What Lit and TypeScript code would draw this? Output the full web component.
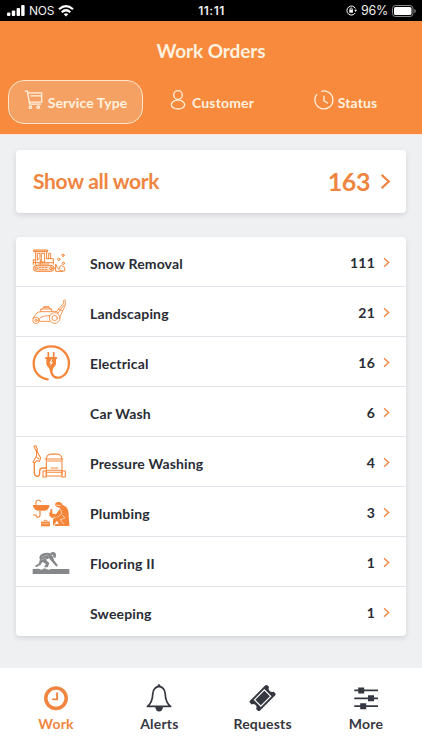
import { LitElement, html, css, svg } from "lit";
import { customElement } from "lit/decorators.js";
import { classMap } from "lit/directives/class-map.js";

const plow = html`<svg class="pic" viewBox="48 21 132 120">
  <g fill="none" stroke="currentColor" stroke-width="3" stroke-linejoin="round" stroke-linecap="round">
    <path d="M60 42H101V47H60Z" fill="#fbc7a2" />
    <path d="M65 47V85M98 47V68M71 52H78V64L71 72ZM83 52H92V78H83Z" />
    <path d="M79 70V85M98 68H118V85M104 68V52H110V68M58 72H65M58 72V85M58 80H118" />
    <path d="M74 84H104" />
    <rect x="58" y="88" width="62" height="18" rx="9" fill="#fde0cb" />
    <circle cx="67" cy="97" r="4" /><circle cx="111" cy="97" r="4" />
    <path d="M76 94H102M76 101H102" stroke-dasharray="5 4" />
    <path d="M120 97H125V84L130 95C133 100 138 103 145 106H125V97M137 98C135 90 141 86 145 90C152 90 153 99 152 105H145" />
    <circle cx="147" cy="58" r="3.5" /><circle cx="134" cy="70" r="3.5" /><circle cx="148" cy="82" r="3.5" />
  </g>
</svg>`;

const mower = html`<svg class="pic" viewBox="48 171 132 120">
  <g fill="none" stroke="currentColor" stroke-width="2.6" stroke-linejoin="round" stroke-linecap="round">
    <circle cx="66" cy="253" r="9.5" /><circle cx="66" cy="253" r="3.5" />
    <circle cx="122" cy="246" r="16" /><circle cx="122" cy="246" r="8" />
    <path d="M77 256H107M57 246L66 234C69 229 76 227 84 227H112C118 224 127 226 133 230M76 250C77 243 86 240 106 239" />
    <path d="M80 227V219H86L89 212H105L108 219H113V227M84 219H110M90 215H104" />
    <path d="M128 226L149 201V193Q151 189 154 193V207L139 240M133 230L150 207M133 219L145 224" />
  </g>
</svg>`;

const plug = html`<svg class="pic" viewBox="48 21 132 120">
  <path d="M101 130C75 127 59 107 59 82A53 51 0 0 1 165 82C165 103 154 119 139 124C125 128 114 122 111 104" fill="none" stroke="currentColor" stroke-width="6.8" stroke-linecap="round" />
  <path d="M103 63V48M119 63V48" stroke="currentColor" stroke-width="5" />
  <path d="M94 63H129V69H126V83Q124 92 118 96L115 106H108L105 96Q98 92 97 83V69H94Z" fill="currentColor" />
  <path d="M113 69L106 82H111L108 91L117 79H112L115 69Z" fill="#fff" />
</svg>`;

const washer = html`<svg class="pic" viewBox="48 21 132 120">
  <g fill="none" stroke="currentColor" stroke-width="3.2" stroke-linejoin="round" stroke-linecap="round">
    <path d="M60 31L66 29L70 40L65 43ZM67 42L68 59L62 70L57 78L62 81L68 74L76 76L80 66L73 53L68 42M69 65L74 68" />
    <path d="M61 81V109Q61 121 70 121Q77 121 77 112V104Q77 98 85 96H97" stroke-width="4" />
    <path d="M97 116V69Q99 55 110 55H132Q142 56 144 69V116M109 54H132M94 69H147M99 103H141M99 109H141" />
    <path d="M101 75H140M112 96H131" stroke-dasharray="8 3" />
    <path d="M87 105H97V123H87ZM144 105H154V123H144ZM97 120H144" />
  </g>
</svg>`;

const plumber = html`<svg class="pic" viewBox="48 171 132 120">
  <path d="M57 207H106V211Q104 223 93 224H71Q60 222 57 211Z" fill="currentColor" />
  <g fill="none" stroke="currentColor" stroke-width="3.6">
    <path d="M66 206V198Q67 192 73 192Q79 192 80 198M78 225V239Q77 244 71 244Q66 243 66 237H57" />
    <path d="M90 257V253H99V257" stroke-width="2.5" />
  </g>
  <path d="M81 257H108V271H81Z" fill="currentColor" />
  <path d="M82 263H107" stroke="#fff" stroke-width="1.3" />
  <path d="M123 207Q123 199 132 198Q143 197 145 206L156 212Q165 220 164 241L166 263V270H122V265L135 263L129 254L121 265L117 270V249L132 239L119 245Q107 247 109 240H106V231L109 227V220H115V233L126 235L139 216L129 213L124 209Z" fill="currentColor" />
  <path d="M139 219L144 232L131 244M145 237L153 246L139 251L149 265M124 207L140 209" fill="none" stroke="#fff" stroke-width="1.8" />
</svg>`;

const floorer = html`<svg class="pic grey" viewBox="48 21 132 120">
  <path d="M56 99L73 98L83 101L91 97L103 101L112 99H166V114H56Z" fill="currentColor" />
  <path d="M80 56Q91 48 106 51L117 62L120 73L131 87V91H126L112 75L105 67L96 71L106 82L101 94H90L96 84L85 78L79 88L68 93L62 91L75 82L78 69Q73 65 80 56Z" fill="currentColor" />
  <path d="M109 51Q118 44 125 52Q127 59 124 66L118 64L117 57L108 56Z" fill="currentColor" />
  <path d="M82 64L99 56L105 63M80 72L94 67L103 77M72 87L81 91" stroke="#fff" stroke-opacity=".6" stroke-width="1.5" fill="none" />
</svg>`;

const chevron = html`<svg class="chev" viewBox="0 0 8 12"><path d="M1.2 1.2L6.4 6L1.2 10.8" fill="none" stroke="currentColor" stroke-width="1.6" /></svg>`;

const rows = [
  { name: "Snow Removal", count: 111, icon: plow },
  { name: "Landscaping", count: 21, icon: mower },
  { name: "Electrical", count: 16, icon: plug },
  { name: "Car Wash", count: 6, icon: null },
  { name: "Pressure Washing", count: 4, icon: washer },
  { name: "Plumbing", count: 3, icon: plumber },
  { name: "Flooring II", count: 1, icon: floorer },
  { name: "Sweeping", count: 1, icon: null },
];

const cart = svg`<path d="M.8 1.2H3.4L5.6 14.2H17.2M3.8 2.8H17.7V12.2H5.3M6.2 5.9H17.5" /><circle cx="6.4" cy="17.2" r="1.2" /><circle cx="14.2" cy="17.2" r="1.2" />`;
const person = svg`<circle cx="10" cy="5" r="4.3" /><ellipse cx="10" cy="14.6" rx="6.7" ry="4.4" />`;
const clock = svg`<path d="M7.2 1.3A9 9 0 1 1 3 4.1M10 5.7V10.8L14 13.2" />`;
const tabs = [
  { name: "Service Type", icon: cart, cls: "service" },
  { name: "Customer", icon: person, cls: "customer" },
  { name: "Status", icon: clock, cls: "status" },
];

const nav = [
  { name: "Work", icon: svg`<circle cx="14" cy="14.3" r="10.2" fill="none" stroke="currentColor" stroke-width="3.5" /><path d="M15.1 8.5V15.4H10.2" fill="none" stroke="currentColor" stroke-width="1.9" />` },
  { name: "Alerts", icon: svg`<path d="M14 2.3Q8.5 3 7.8 9.5Q7.6 18.4 2.4 22.4H25.6Q20.4 18.4 20.2 9.5Q19.5 3 14 2.3Z" fill="none" stroke="currentColor" stroke-width="1.7" stroke-linejoin="round" /><path d="M10.3 23H17.9Q17.4 27.5 14.1 27.5Q10.8 27.5 10.3 23Z" fill="currentColor" /><circle cx="14" cy="1.7" r="1.4" fill="currentColor" />` },
  { name: "Requests", icon: svg`<g transform="translate(13.6 14) rotate(-45) scale(.88) translate(-14 -14)"><path d="M2 6H26Q28 6 28 8V10.5Q25.4 11 25.4 14Q25.4 17 28 17.5V20Q28 22 26 22H2Q0 22 0 20V17.5Q2.6 17 2.6 14Q2.6 11 0 10.5V8Q0 6 2 6Z" fill="currentColor" /><rect x="6.1" y="8.9" width="15.8" height="10.2" fill="none" stroke="#fff" stroke-width="1.3" /></g>` },
  { name: "More", icon: svg`<path d="M2.3 6.4H26M2.3 14.3H26M2.3 22.2H26" stroke="currentColor" stroke-width="1.7" /><path d="M6.2 3.4H12.2V9.4H6.2ZM16 11.3H22V17.3H16ZM8.2 19.2H14.2V25.2H8.2Z" fill="currentColor" />` },
];

@customElement("app-root")
export class AppRoot extends LitElement {
  static styles = css`
    :host { display: flex; flex-direction: column; width: 100%; height: 750px; background: #eff0f2; font-family: Lato, sans-serif; font-weight: 700; color: #292c35; overflow: hidden; }
    * { box-sizing: border-box; }
    svg { display: block; flex: none; overflow: visible; }
    .phone { height: 21px; flex: none; background: #000; color: #eee; display: grid; grid-template-columns: 1fr auto 1fr; align-items: center; font: 12.5px Inter, sans-serif; padding: 0 6px 0 7px; }
    .left, .right { display: flex; align-items: center; }
    .left { gap: 4px; }
    .right { justify-content: flex-end; gap: 4px; }
    .carrier { letter-spacing: -.2px; font-size: 12px; }
    .time { font-weight: 600; font-size: 12px; letter-spacing: .5px; }
    .percent { letter-spacing: -.3px; }
    header { height: 114px; flex: none; background: #f88a3e; color: #fff1df; border-bottom: 1px solid #fde3d3; padding-top: 17px; }
    h1 { margin: 0; font-size: 19px; line-height: 26px; text-align: center; letter-spacing: -.1px; }
    .tabs { display: grid; grid-template-columns: 135px 1fr 135px; padding: 16px 8px 0; }
    .tab { height: 44px; display: flex; align-items: center; justify-content: center; font-size: 14px; letter-spacing: .15px; gap: 4px; border: 1.5px solid transparent; border-radius: 16px; white-space: nowrap; }
    .tab.active { background: #f6a164; border-color: #ffe5cd; letter-spacing: .1px; }
    .tab svg { width: 20px; height: 20px; fill: none; stroke: currentColor; stroke-width: 1.3; margin-top: -4px; }
    .status { padding-right: 2px; }
    main { flex: 1; padding: 15px 16px 0; display: flex; flex-direction: column; gap: 24px; }
    .card { background: #fff; border-radius: 4px; box-shadow: 0 2px 5px rgba(60, 65, 80, .16); }
    .all { height: 63px; display: flex; align-items: center; justify-content: space-between; padding: 0 15px 2px 17px; color: #ef8540; font-size: 21px; letter-spacing: -.3px; }
    .total { display: flex; align-items: center; gap: 10px; font-size: 25px; letter-spacing: -.4px; }
    .row { height: 50px; border-bottom: 1.5px solid #e2e3ea; display: flex; align-items: center; padding: 1px 16px 0 14px; }
    .row:last-child { height: 49px; border: 0; }
    .pic { width: 44px; height: 40px; color: #f58639; }
    .grey { color: #86878a; }
    .slot { width: 60px; height: 40px; padding-top: 1px; }
    .name { flex: 1; font-size: 14px; padding-top: 3px; letter-spacing: .15px; }
    .num { font-size: 14px; letter-spacing: .2px; }
    .chev { width: 7px; height: 11px; margin-left: 8px; color: #ef8540; }
    .total .chev { width: 11px; height: 17px; margin: 2px 0 0; }
    nav { height: 82px; flex: none; background: #fff; display: grid; grid-template-columns: repeat(4, 103.3px); justify-content: center; padding-top: 16px; }
    .item { display: flex; flex-direction: column; align-items: center; gap: 3px; font-size: 14px; line-height: 18px; color: #363841; letter-spacing: .2px; }
    .item svg { width: 28px; height: 28px; }
    .item.active { color: #ef8540; }
  `;

  render() {
    return html`
      <div class="phone">
        <div class="left">
          <svg width="18" height="12" viewBox="0 0 18 12" fill="#fff"><rect y="7.5" width="3.4" height="3.5" rx="1" /><rect x="4.8" y="5.5" width="3.4" height="5.5" rx="1" /><rect x="9.6" y="3" width="3.4" height="8" rx="1" /><rect x="14.2" y="0" width="3.4" height="11" rx="1" /></svg>
          <span class="carrier">NOS</span>
          <svg class="wifi" width="16" height="12" viewBox="0 0 16 12" fill="none" stroke="#fff" stroke-width="2.2"><path d="M1 4.3Q8-2 15 4.3M3.7 7.2Q8 3.3 12.3 7.2" /><path d="M5.8 9.2Q8 7.3 10.2 9.2L8 11.6Z" fill="#fff" stroke="none" /></svg>
        </div>
        <span class="time">11:11</span>
        <div class="right">
          <svg width="11" height="11" viewBox="0 0 11 11"><path d="M9.4 3.5A4.5 4.5 0 1 0 9.2 8" fill="none" stroke="#fff" /><path d="M8.2 4.7H11L9.6 7Z" fill="#fff" /><rect x="3.3" y="4.7" width="3.6" height="3" fill="#fff" /><path d="M4 5V4A1.1 1.1 0 0 1 6.2 4V5" fill="none" stroke="#fff" stroke-width=".8" /></svg>
          <span class="percent">96%</span>
          <svg width="24" height="12" viewBox="0 0 24 12"><rect x=".5" y=".5" width="20.5" height="11" rx="3" fill="none" stroke="#8a8a8a" /><rect x="2" y="2" width="17.5" height="8" rx="1.6" fill="#fff" /><path d="M22.3 4V8Q23.8 7.3 23.8 6T22.3 4Z" fill="#8a8a8a" /></svg>
        </div>
      </div>
      <header>
        <h1>Work Orders</h1>
        <div class="tabs">
          ${tabs.map((t, i) => html`<div class=${classMap({ tab: true, active: i === 0, [t.cls]: true })}><svg viewBox="0 0 20 20">${t.icon}</svg><span>${t.name}</span></div>`)}
        </div>
      </header>
      <main>
        <div class="card all"><span>Show all work</span><span class="total">163${chevron}</span></div>
        <div class="card">
          ${rows.map((r) => html`<div class="row"><div class="slot">${r.icon}</div><span class="name">${r.name}</span><span class="num">${r.count}</span>${chevron}</div>`)}
        </div>
      </main>
      <nav>
        ${nav.map((n, i) => html`<div class=${classMap({ item: true, active: i === 0 })}><svg viewBox="0 0 28 28">${n.icon}</svg><span>${n.name}</span></div>`)}
      </nav>
    `;
  }
}
